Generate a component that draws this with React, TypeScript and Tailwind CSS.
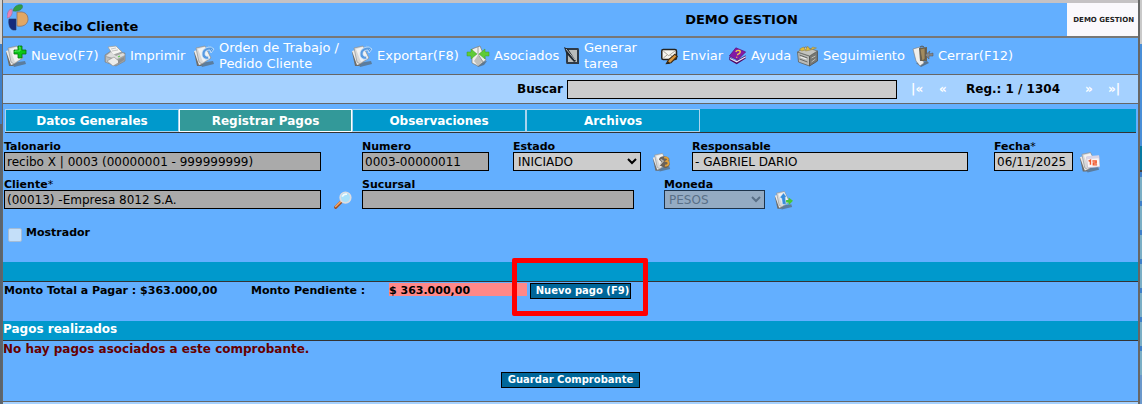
import React from "react";

const PAPER = "M3 3 L12 1 L18 13 L9 19 L6 17 Z";

function Paper() {
  return (
    <>
      <path d="M7 18 L20 16 L21 19 L9 22 Z" fill="#55534f" opacity="0.55" />
      <path d="M1 7 L6 4 L12 17 L8 21 L4 21 Z" fill="#6d6d6b" />
      <path d="M1 6 L4 5 L9 19 L6 20 Z" fill="#ecebe9" />
      <path d={PAPER} fill="#d9d9d8" stroke="#8b8f94" strokeWidth="0.7" />
      <path d="M5 4 L12 2 L17 13 L10 17 Z" fill="#f3f3f2" />
    </>
  );
}

function Icon({ className, children }: { className: string; children: React.ReactNode }) {
  return (
    <svg viewBox="0 0 22 22" className={`block shrink-0 ${className}`} aria-hidden="true">
      {children}
    </svg>
  );
}

const NewIcon = () => (
  <Icon className="size-[22px]">
    <Paper />
    <path d="M13 1 h4 v4 h4 v4 h-4 v4 h-4 v-4 h-4 v-4 h4 Z" fill="#0bc516" stroke="#07730d" strokeWidth="0.8" />
    <path d="M14 2 h1 v4 h-5 v1" fill="none" stroke="#6cf274" strokeWidth="0.8" />
  </Icon>
);

const PrintIcon = () => (
  <Icon className="size-[22px]">
    <path d="M1 10 L7 6 L21 8 L21 16 L12 21 L1 17 Z" fill="#a4a5a4" stroke="#7c7d7d" strokeWidth="0.6" />
    <path d="M4 2 L12 1 L18 7 L9 10 Z" fill="#f4f4f2" stroke="#9b9c9b" strokeWidth="0.7" />
    <path d="M2 11 L7 7 L12 11 L19 8 L21 10 L13 14 Z" fill="#dededd" />
    <path d="M2 12 L12 16 L12 20 L2 17 Z" fill="#bebfbe" />
    <path d="M3 16 L10 12 L16 17 L9 21 Z" fill="#ededeb" stroke="#8b8b8b" strokeWidth="0.6" />
    <path d="M14 15 L20 12 V15 L14 19 Z" fill="#8e8f8f" />
    <path d="M14 12 l2 -1" stroke="#5cc94b" strokeWidth="1.3" />
    <path d="M7 4 l5 -1 M8 6 l6 -1" stroke="#c5c5c4" />
  </Icon>
);

const RefreshIcon = () => (
  <Icon className="size-[22px]">
    <Paper />
    <path d="M18 2 C12 2 9 5 9 9 C9 13 12 15 16 14 L15 11 C13 12 12 10 12 9 C12 6 14 5 17 5 L18 8 L21 4 Z" fill="#589ae0" stroke="#cfe5fb" strokeWidth="0.8" />
    <path d="M15 1 L20 3 L18 5" fill="none" stroke="#8cc3f5" />
  </Icon>
);

const AssociatedIcon = () => (
  <Icon className="h-[22px] w-6">
    <path d="M9 18 L20 16 L17 20 L11 22 Z" fill="#57534c" opacity="0.6" />
    <path d="M5 4 L13 1 L19 15 L11 21 L5 18 Z" fill="#f0f0ee" stroke="#77776f" strokeWidth="0.7" />
    <path d="M7 16 L11 10 L16 16 L11 21 Z" fill="#bfc0bd" />
    <path d="M11 2 L11 9 L16 17" fill="none" stroke="#8d8e89" strokeWidth="0.8" />
    <path d="M0 7 H4 V4 L10 9 L4 14 V11 H0 Z" fill="#5fcb37" stroke="#3f9c25" strokeWidth="0.5" />
    <path d="M22 7 H18 V4 L12 9 L18 14 V11 H22 Z" fill="#5fcb37" stroke="#3f9c25" strokeWidth="0.5" />
  </Icon>
);

const TaskIcon = () => (
  <svg viewBox="0 0 16 18" className="block h-[18px] w-4 shrink-0" aria-hidden="true">
    <path d="M2 1 H14 Q15 1 15 3 V17 H3 Q2 17 2 15 Z" fill="#2f3a46" />
    <path d="M4 3 H13 V15 H4 Z" fill="#b9bcbb" />
    <path d="M0 0 L4 2 L12 14 L10 15 L2 6 Z" fill="#20272e" />
    <path d="M2 2 L11 13" stroke="#d5d9dc" strokeWidth="0.8" />
  </svg>
);

const SendIcon = () => (
  <Icon className="size-[17px]">
    <rect x="1" y="2" width="19" height="13" rx="2" fill="#f6f5ef" stroke="#26241f" strokeWidth="2" />
    <path d="M3 4 L10 10 L18 4 M3 13 L8 9 M17 13 L12 9" fill="none" stroke="#9f9c91" strokeWidth="1.2" />
    <path d="M7 20 L10 15 L18 8 L21 11 L13 19 Z" fill="#d9953b" stroke="#392a17" strokeWidth="1.4" />
    <path d="M7 21 L9 17 L12 20 Z" fill="#27221c" />
  </Icon>
);

const HelpIcon = () => (
  <Icon className="h-[18px] w-[19px]">
    <path d="M1 12 L9 17 L21 10 V14 L10 21 L1 16 Z" fill="#4f0865" />
    <path d="M2 14 L10 18 L21 12" fill="none" stroke="#eee5f3" strokeWidth="1.5" />
    <path d="M1 11 L9 1 L21 6 L11 16 Z" fill="#8319a4" stroke="#590874" strokeWidth="0.8" />
    <path d="M9 6 C10 3 16 4 14 7 C13 9 11 8 11 10 M10 12 L10 13" fill="none" stroke="#f3c94b" strokeWidth="1.7" />
  </Icon>
);

const TrackIcon = () => (
  <Icon className="h-[22px] w-[23px]">
    <path d="M1 7 L13 11 V21 L2 17 Z" fill="#b9bab7" stroke="#5e5f5b" strokeWidth="0.8" />
    <path d="M13 11 L21 6 V16 L13 21 Z" fill="#767773" stroke="#53534e" strokeWidth="0.8" />
    <path d="M1 7 L9 2 L21 6 L13 11 Z" fill="#c4c4bf" stroke="#6b6b64" strokeWidth="0.8" />
    <path d="M3 4 L7 2 L9 5 L5 6 Z M9 6 L11 1 L14 5 Z M14 5 L16 2 L20 3 Z" fill="#e2bd38" stroke="#8f8756" strokeWidth="0.6" />
    <path d="M3 10 L11 13 M3 14 L11 17" stroke="#4f504c" strokeWidth="0.8" />
    <path d="M4 12 L10 14" stroke="#f2f2ef" strokeWidth="1.3" />
    <path d="M15 13 L19 11 M15 17 L19 14" stroke="#bcbcb5" />
  </Icon>
);

const CloseIcon = () => (
  <Icon className="size-[22px]">
    <path d="M4 18 L15 16 L17 18 L9 22 Z" fill="#4e4b45" opacity="0.6" />
    <path d="M1 4 L8 2 L12 18 L8 21 L4 16 Z" fill="#efefed" stroke="#777" strokeWidth="0.6" />
    <path d="M7 3 L15 2 V16 L8 16 Z" fill="#696356" />
    <path d="M8 4 L13 3 V14 L10 16 Z" fill="#a28b5f" stroke="#5a503c" strokeWidth="0.6" />
    <path d="M21 8 L17 9 L18 6 L13 10 L17 14 V11 L21 11 Z" fill="#85888b" stroke="#505356" strokeWidth="0.5" />
    <path d="M8 2 Q10 0 12 2" fill="none" stroke="#555" />
  </Icon>
);

const StatusIcon = () => (
  <Icon className="h-[20px] w-[19px]">
    <Paper />
    <path d="M8 8 C9 4 16 3 20 7 L20 11 C22 14 19 18 15 18 L9 15 L12 12 Z" fill="#6b6258" />
    <path d="M14 6 C18 5 20 8 17 10 C21 11 19 16 15 15" fill="none" stroke="#e0a03a" strokeWidth="2.2" />
    <path d="M10 8 L13 10 L10 13" fill="none" stroke="#b9b5ae" strokeWidth="1.5" />
  </Icon>
);

const CurrencyIcon = () => (
  <Icon className="h-[20px] w-[19px]">
    <Paper />
    <path d="M7 8 L11 3 L14 7 L13 8 L14 16 L10 16 L9 9 Z" fill="#388bd9" stroke="#a9d4f7" strokeWidth="0.6" />
    <path d="M14 11 H17 V8 L22 12 L17 17 V14 H14 Z" fill="#47c638" />
  </Icon>
);

const CalendarIcon = () => (
  <Icon className="h-[22px] w-[21px]">
    <Paper />
    <path d="M8 6 L21 5 L22 16 L9 17 Z" fill="#faf6f6" stroke="#b8b3c9" strokeWidth="0.7" />
    <path d="M8 5 L21 4 V7 L8 8 Z" fill="#d8d4e6" />
    <path d="M10 10 L12 9 V14 M14 10 H18 V12 H15 V14 H19" fill="none" stroke="#f05a2e" strokeWidth="1.5" />
  </Icon>
);

const SearchIcon = () => (
  <Icon className="size-[18px]">
    <path d="M2 20 L9 13" stroke="#994d25" strokeWidth="3.6" strokeLinecap="round" />
    <path d="M2 19 L8 13" stroke="#f4a461" strokeWidth="2" strokeLinecap="round" />
    <circle cx="14" cy="8" r="6.5" fill="#a9e1fb" stroke="#dcdde2" strokeWidth="2" />
    <path d="M10 7 Q12 3 16 4" fill="none" stroke="#f4fcff" strokeWidth="2" />
  </Icon>
);

const BrandLogo = () => (
  <svg viewBox="0 0 22 28" className="block h-7 w-[22px] shrink-0" aria-hidden="true">
    <path d="M6 8 C7 3 11 1 15 2 C17 5 13 9 6 8 Z" fill="#2f9f45" stroke="#39724a" strokeWidth="0.6" />
    <path d="M0 15 C0 9 2 6 5 6 C6 11 4 14 1 15 Z" fill="#eb83b4" stroke="#94719b" strokeWidth="0.6" />
    <path d="M2 16 H9 V27 H6 C3 26 1 22 2 16 Z" fill="#142b7d" stroke="#273966" strokeWidth="0.6" />
    <path d="M10 9 H15 C20 10 21 13 21 17 C20 22 16 24 10 23 Z" fill="#e2a764" stroke="#8b7267" strokeWidth="0.8" />
  </svg>
);

const actions = [
  { label: "Nuevo(F7)", icon: <NewIcon />, width: "w-[99px]" },
  { label: "Imprimir", icon: <PrintIcon />, width: "w-[89px]" },
  { label: "Orden de Trabajo / Pedido Cliente", icon: <RefreshIcon />, width: "w-[158px]" },
  { label: "Exportar(F8)", icon: <RefreshIcon />, width: "w-[115px]" },
  { label: "Asociados", icon: <AssociatedIcon />, width: "w-[98px]" },
  { label: "Generar tarea", icon: <TaskIcon />, width: "w-[97px]" },
  { label: "Enviar", icon: <SendIcon />, width: "w-[67px]" },
  { label: "Ayuda", icon: <HelpIcon />, width: "w-[68px]" },
  { label: "Seguimiento", icon: <TrackIcon />, width: "w-[116px]" },
  { label: "Cerrar(F12)", icon: <CloseIcon />, width: "w-[110px]" },
];

const tabs = ["Datos Generales", "Registrar Pagos", "Observaciones", "Archivos"];

const box = "h-[19px] min-w-0 rounded-none border border-black px-[2px] text-[12px] leading-4 text-black";
const locked = `${box} bg-[#aaaaaa]`;
const open = `${box} bg-[#cccccc]`;

function Field({ id, label, required, className = "", children }: {
  id: string;
  label: string;
  required?: boolean;
  className?: string;
  children: React.ReactNode;
}) {
  return (
    <div className={`flex min-w-0 flex-col ${className}`}>
      <label htmlFor={id} className="h-[13px] text-[11px] leading-4 font-bold whitespace-nowrap">
        {label}
        {required && <span className="font-normal">*</span>}
      </label>
      <div className="flex h-[19px] items-center">{children}</div>
    </div>
  );
}

const actionButton = "h-4 border border-black bg-[#006699] text-[10px] leading-[14px] font-bold whitespace-nowrap text-white";

export default function App() {
  return (
    <div className="flex min-h-screen bg-[#63afff] font-['Verdana','DejaVu_Sans',sans-serif] text-black">
      <div className="flex w-[3px] shrink-0 flex-col border-r border-[#666666]">
        <div className="h-11 bg-[#d4d4d4]" />
        <div className="h-20 bg-[#3f80c9]" />
        <div className="grow bg-[#5a646e]" />
      </div>

      <div className="flex min-w-0 grow flex-col">
        <header className="grid h-[38px] grid-cols-[1fr_auto_1fr] border-t-3 border-b-2 border-t-[#c5c2c4] border-b-[#777777]">
          <div className="flex items-start gap-1 pl-1">
            <BrandLogo />
            <h1 className="pt-4 text-[13px] leading-4 font-bold">Recibo Cliente</h1>
          </div>
          <p className="col-span-1 pt-[9px] pl-[342px] text-[13px] leading-4 font-bold whitespace-nowrap">DEMO GESTION</p>
          <div className="flex w-[71px] items-center justify-end justify-self-end bg-[#faf8fc] pr-1 font-['DejaVu_Sans',sans-serif] text-[7px] leading-3 font-bold whitespace-nowrap text-[#222222]">
            DEMO GESTION
          </div>
        </header>

        <nav className="flex h-[37px] items-center border-b border-[#666666] pl-[2px]" aria-label="Acciones">
          {actions.map((a) => (
            <button key={a.label} type="button" className={`flex shrink-0 items-center gap-1 text-left text-[13px] leading-4 text-white ${a.width}`}>
              {a.icon}
              <span>{a.label}</span>
            </button>
          ))}
        </nav>

        <div className="flex h-[29px] items-center justify-end border-b border-[#666666] bg-[#a5d1ff] pr-[14px] text-[12px] leading-4 font-bold">
          <label htmlFor="buscar" className="pr-1">Buscar</label>
          <input id="buscar" className="h-[19px] w-[330px] border border-black bg-[#cccccc] px-1 font-normal" />
          <div className="flex items-center justify-between pl-[14px] text-white">
            <button type="button" aria-label="Primero" className="w-7 text-left">|«</button>
            <button type="button" aria-label="Anterior" className="w-[27px] text-left">«</button>
            <span className="w-[119px] whitespace-nowrap text-black">Reg.: 1 / 1304</span>
            <button type="button" aria-label="Siguiente" className="w-[23px] text-left">»</button>
            <button type="button" aria-label="Último" className="w-4 text-left">»|</button>
          </div>
        </div>

        <main className="flex grow flex-col">
          <div className="mx-[2px] mt-[5px] flex h-6 border-b border-[#333333] bg-[#0099cc]" role="tablist">
            {tabs.map((t, i) => (
              <button
                key={t}
                type="button"
                role="tab"
                aria-selected={i === 1}
                className={
                  i === 1
                    ? "w-[173px] border border-white bg-[#339999] text-[12px] leading-4 font-bold text-white"
                    : "w-[174px] border border-[#a9d4ee] bg-[#0099cc] text-[12px] leading-4 font-bold text-white"
                }
              >
                {t}
              </button>
            ))}
          </div>

          <form className="flex flex-col gap-[6px] pt-[6px] pl-px" onSubmit={(e) => e.preventDefault()}>
            <div className="grid grid-cols-[358fr_151fr_179fr_302fr_144fr]">
              <Field id="talonario" label="Talonario" className="pr-[41px]">
                <input id="talonario" readOnly className={`${locked} grow`} defaultValue="recibo X | 0003 (00000001 - 999999999)" />
              </Field>
              <Field id="numero" label="Numero" className="pr-6">
                <input id="numero" readOnly className={`${locked} w-full`} defaultValue="0003-00000011" />
              </Field>
              <Field id="estado" label="Estado" className="pr-[21px]">
                <select id="estado" className="h-[19px] min-w-0 grow rounded-none border border-black bg-[#cccccc] text-[12px] leading-4 text-black">
                  <option>INICIADO</option>
                </select>
                <button type="button" aria-label="Cambiar estado" className="pl-[11px]"><StatusIcon /></button>
              </Field>
              <Field id="responsable" label="Responsable" className="pr-[26px]">
                <input id="responsable" className={`${open} w-full`} defaultValue="- GABRIEL DARIO" />
              </Field>
              <Field id="fecha" label="Fecha" required>
                <input id="fecha" className={`${open} w-[79px]`} defaultValue="06/11/2025" />
                <button type="button" aria-label="Elegir fecha" className="pl-[6px]"><CalendarIcon /></button>
              </Field>
            </div>

            <div className="grid grid-cols-[358fr_302fr_474fr]">
              <Field id="cliente" label="Cliente" required className="pr-[10px]">
                <input id="cliente" readOnly className={`${locked} grow`} defaultValue="(00013) -Empresa 8012 S.A." />
                <button type="button" aria-label="Buscar cliente" className="pl-[13px]"><SearchIcon /></button>
              </Field>
              <Field id="sucursal" label="Sucursal" className="pr-[30px]">
                <input id="sucursal" readOnly className={`${locked} w-full`} />
              </Field>
              <Field id="moneda" label="Moneda">
                <select id="moneda" disabled className="h-[19px] w-[101px] rounded-none border border-black bg-[#aaaaaa] text-[12px] leading-4 text-[#555555] opacity-70">
                  <option>PESOS</option>
                </select>
                <button type="button" aria-label="Actualizar moneda" className="pl-[9px]"><CurrencyIcon /></button>
              </Field>
            </div>

            <div className="flex h-[47px] items-start gap-1 pt-[10px] pl-1">
              <input id="mostrador" type="checkbox" disabled className="mt-[3px] size-[14px] appearance-none rounded-xs border border-[#a5bcd5] bg-[#c4dff9]" />
              <label htmlFor="mostrador" className="text-[11px] leading-4 font-bold">Mostrador</label>
            </div>
          </form>

          <div className="h-5 border-b border-[#333333] bg-[#0099cc]" />
          <div className="flex h-[39px] items-start pt-px pl-px text-[11px] leading-4 font-bold">
            <span className="w-[247px] whitespace-nowrap">Monto Total a Pagar : $363.000,00</span>
            <span className="w-[138px] whitespace-nowrap">Monto Pendiente :</span>
            <span className="h-[13px] w-[138px] bg-[#ff8888]">$ 363.000,00</span>
            <div className="relative ml-[3px] flex">
              <button type="button" className={`${actionButton} w-[101px] pl-1`}>Nuevo pago (F9)</button>
              <div className="pointer-events-none absolute -top-[25px] -right-[17px] -bottom-[17px] -left-[18px] rounded-xs border-5 border-[#ff0000]" />
            </div>
          </div>

          <h2 className="h-5 border-b border-[#333333] bg-[#0099cc] text-[12px] leading-4 font-bold text-white">Pagos realizados</h2>
          <p className="text-[12px] leading-4 font-bold text-[#660000]">No hay pagos asociados a este comprobante.</p>
          <div className="flex grow items-start justify-center pt-[15px]">
            <button type="button" className={`${actionButton} w-[139px]`}>Guardar Comprobante</button>
          </div>
        </main>
        <div className="h-[3px] border-t border-[#666666] bg-[#a5d1ff]" />
      </div>

      <div className="flex w-1 shrink-0 flex-col border-l-2 border-[#666666]">
        <div className="h-11 bg-[#c9c9c9]" />
        <div className="h-[102px] bg-[#4a8fd8]" />
        <div className="h-[26px] border-b-2 border-[#444444] bg-[#087aa3]" />
        {["a", "b", "c", "d", "e", "f", "g"].map((k) => (
          <div key={k} className="h-[29px] border-t-5 border-[#3f80c9] bg-[#7bafc6]" />
        ))}
        <div className="grow bg-[#6b98cb]" />
      </div>
    </div>
  );
}
